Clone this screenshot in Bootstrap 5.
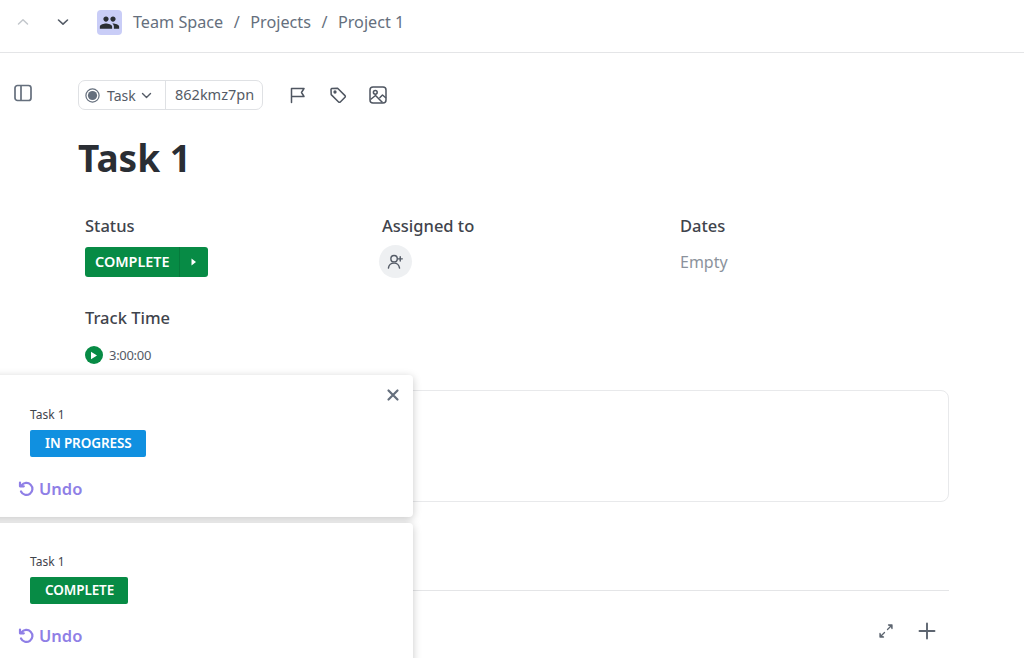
<!DOCTYPE html>
<html lang="en">
<head>
<meta charset="utf-8">
<title>Task 1</title>
<link href="https://cdn.jsdelivr.net/npm/bootstrap@5.3.0/dist/css/bootstrap.min.css" rel="stylesheet">
<style>
html,body{height:658px;overflow:hidden;background:#fff}
body{font-family:"Noto Sans","Open Sans",sans-serif;color:#2a2e34;position:relative}
svg{display:block}
.topstrip{height:53px;border-bottom:1px solid #e4e5e7;padding:0 0 8px 16px;color:#656f7d}
.chev-gap{margin:0 27px 0 26px}
.crumb-ico{width:25px;height:25px;background:#c9cdf7;border-radius:4px;color:#2a2e34}
.crumb{font-size:16.2px;line-height:22px;margin-left:11px}
.sep{margin:0 10.500px 0 10.500px}
.stage{display:flex;padding:27px 75px 0 14px}
.sidebtn{width:18px;margin-top:4px;color:#656f7d;flex:none}
.mainarea{margin-left:46px;flex:1;min-width:0}
.idgroup{height:30px;border:1px solid #dfe1e4;border-radius:7px;font-size:14.5px;color:#545b66}
.idleft{padding:0 8px 0 6px;border-right:1px solid #dfe1e4;height:100%;gap:5px;width:87px;font-size:14px}
.idkind{margin-left:2px}
.idright{padding:0 8px 0 9px}
.tools{margin-left:26px;gap:22px;color:#4f5661}
.title{font-size:37px;font-weight:700;line-height:50px;margin:23px 0 0;color:#2a2e34}
.fields{display:grid;grid-template-columns:297px 298px 1fr;padding-left:7px;margin-top:32px}
.flabel{font-size:16.500px;font-weight:500;line-height:22px;color:#3f444c}
.statuspill{margin-top:10px;height:30px;width:123px;background:#078b45;color:#fff;border-radius:3px;font-size:14.400px;font-weight:600}
.statustext{flex:1;padding-left:10px;line-height:30px}
.statusarrow{width:29px;height:100%;border-left:1px solid #067a3c}
.adduser{width:33px;height:33px;border-radius:50%;background:#eef0f2;margin:8px 0 0 -3px;color:#545b66}
.emptytxt{font-size:16px;color:#8b929c;line-height:30px;margin-top:10px}
.tracklabel{margin:29px 0 0 7px}
.timer{margin:17px 0 0 7px;gap:6px;font-size:13px;color:#545b66;line-height:18px;letter-spacing:-.3px}
.playdot{width:18px;height:18px;background:#078b45;border-radius:50%}
.descbox{height:112px;border:1px solid #e8e9eb;border-radius:8px;margin-top:26px}
.rule{border-top:1px solid #e4e5e7;margin-top:88px}
.bottomtools{gap:24px;margin-top:31px;padding-right:13px;color:#656f7d}
.toasts{position:absolute;left:-12px;top:375px;width:425px;display:flex;flex-direction:column;gap:6px}
.notice{background:#fff;border-radius:4px;box-shadow:0 2px 9px rgba(0,0,0,.22);padding:30px 0 0 42px;position:relative}
.notice-a{height:142px}
.notice-b{height:150px;padding-top:29px}
.ntitle{font-size:12px;line-height:20px;color:#3f444c}
.nbadge{display:inline-block;height:27px;line-height:27px;padding:0 14px 0 15px;border-radius:2px;color:#fff;font-size:13.500px;font-weight:600;letter-spacing:-.1px;margin-top:5px}
.bg-prog{background:#1090e0}
.bg-comp{background:#078b45}
.undo{position:absolute;left:30px;font-size:16.500px;font-weight:600;color:#8f7fe6;gap:4px;line-height:22px;top:103px}
.notice-b .undo{top:102px}
.closex{position:absolute;right:13px;top:13px;color:#656f7d}
</style>
</head>
<body>
<div class="topstrip d-flex align-items-center">
  <svg width="14" height="14" viewBox="0 0 14 14" fill="none" stroke="#c3c7cc" stroke-width="1.500" stroke-linecap="round" stroke-linejoin="round"><path d="M2.500 9 7 4.800 11.500 9"/></svg>
  <svg class="chev-gap" width="14" height="14" viewBox="0 0 14 14" fill="none" stroke="#545b66" stroke-width="1.600" stroke-linecap="round" stroke-linejoin="round"><path d="M2.500 5 7 9.200 11.500 5"/></svg>
  <div class="crumb-ico d-flex align-items-center justify-content-center">
    <svg width="21" height="21" viewBox="0 0 24 24" fill="currentColor"><path d="M16 11c1.660 0 2.990-1.340 2.990-3S17.660 5 16 5s-3 1.340-3 3 1.340 3 3 3zm-8 0c1.660 0 2.990-1.340 2.990-3S9.660 5 8 5 5 6.340 5 8s1.340 3 3 3zm0 2c-2.330 0-7 1.170-7 3.500V19h14v-2.500C15 14.170 10.330 13 8 13zm8 0c-.290 0-.620.020-.970.050 1.160.840 1.970 1.970 1.970 3.450V19h6v-2.500c0-2.330-4.670-3.500-7-3.500z"/></svg>
  </div>
  <div class="crumb d-flex"><span>Team Space</span><span class="sep">/</span><span>Projects</span><span class="sep">/</span><span>Project 1</span></div>
</div>

<div class="stage">
  <div class="sidebtn">
    <svg width="18" height="18" viewBox="0 0 18 18" fill="none" stroke="currentColor" stroke-width="1.700"><rect x="1" y="1.500" width="16" height="15" rx="2.500"/><path d="M7 1.500v15"/></svg>
  </div>
  <div class="mainarea">
    <div class="d-flex align-items-center">
      <div class="idgroup d-flex align-items-center">
        <div class="idleft d-flex align-items-center">
          <svg width="15" height="15" viewBox="0 0 15 15"><circle cx="7.500" cy="7.500" r="6.600" fill="none" stroke="#656f7d" stroke-width="1.200"/><circle cx="7.500" cy="7.500" r="4.600" fill="#656f7d"/></svg>
          <span class="idkind">Task</span>
          <svg width="11" height="11" viewBox="0 0 11 11" fill="none" stroke="#545b66" stroke-width="1.400" stroke-linecap="round" stroke-linejoin="round"><path d="M1.500 3.500 5.500 7.500 9.500 3.500"/></svg>
        </div>
        <div class="idright">862kmz7pn</div>
      </div>
      <div class="tools d-flex align-items-center">
        <svg width="18" height="18" viewBox="0 0 18 18" fill="none" stroke="currentColor" stroke-width="1.500" stroke-linejoin="round" stroke-linecap="round"><path d="M2.500 16.500V2.500h12.500l-2.500 4 2.500 4H2.500"/></svg>
        <svg width="18" height="18" viewBox="0 0 18 18" fill="none" stroke="currentColor" stroke-width="1.500" stroke-linejoin="round"><path d="M2 3.200 2.600 2.600 8.600 2.200 16 9.600a1.200 1.200 0 0 1 0 1.700l-4.700 4.700a1.200 1.200 0 0 1-1.700 0L2.200 8.600Z"/><circle cx="6" cy="6" r=".9"/></svg>
        <svg width="18" height="18" viewBox="0 0 18 18" fill="none" stroke="currentColor" stroke-width="1.500" stroke-linejoin="round"><rect x="1" y="1" width="16" height="16" rx="3"/><circle cx="6.300" cy="6.300" r="1.900"/><path d="M1.500 13.500 6.500 9.500l7 7M10.500 12l3-3 3.500 3"/></svg>
      </div>
    </div>
    <h1 class="title">Task 1</h1>
    <div class="fields">
      <div>
        <div class="flabel">Status</div>
        <div class="statuspill d-flex align-items-center">
          <span class="statustext">COMPLETE</span>
          <span class="statusarrow d-flex align-items-center justify-content-center"><svg width="8" height="10" viewBox="0 0 8 10" fill="#fff"><path d="M1.500 1.500 6 5 1.500 8.500Z"/></svg></span>
        </div>
      </div>
      <div>
        <div class="flabel">Assigned to</div>
        <div class="adduser d-flex align-items-center justify-content-center">
          <svg width="17" height="17" viewBox="0 0 18 18" fill="none" stroke="currentColor" stroke-width="1.500" stroke-linecap="round"><circle cx="7.500" cy="6" r="3.400"/><path d="M1.500 16c.4-3.400 2.800-5.300 6-5.300s5.200 1.600 5.800 5.300M14 4v4.500M11.800 6.200h4.400"/></svg>
        </div>
      </div>
      <div>
        <div class="flabel">Dates</div>
        <div class="emptytxt">Empty</div>
      </div>
    </div>
    <div class="flabel tracklabel">Track Time</div>
    <div class="timer d-flex align-items-center">
      <span class="playdot d-flex align-items-center justify-content-center"><svg width="8" height="9" viewBox="0 0 8 9" fill="#fff"><path d="M1 .8 7 4.500 1 8.200Z"/></svg></span>
      <span>3:00:00</span>
    </div>
    <div class="descbox"></div>
    <div class="rule"></div>
    <div class="bottomtools d-flex justify-content-end align-items-center">
      <svg width="16" height="16" viewBox="0 0 16 16" fill="#5d6570" stroke="#5d6570" stroke-width="1.300" stroke-linecap="round" stroke-linejoin="round"><path d="M9.500 6.500 14 2M10.500 2H14V5.500M6.500 9.500 2 14M2 10.500V14H5.500"/></svg>
      <svg width="18" height="18" viewBox="0 0 18 18" fill="none" stroke="#5d6570" stroke-width="1.900" stroke-linecap="round"><path d="M9 1.500v15M1.500 9h15"/></svg>
    </div>
  </div>
</div>

<div class="toasts">
  <div class="notice notice-a">
    <svg class="closex" width="14" height="14" viewBox="0 0 14 14" fill="none" stroke="currentColor" stroke-width="2.200" stroke-linecap="round"><path d="M2.500 2.500l9 9M11.500 2.500l-9 9"/></svg>
    <div class="ntitle">Task 1</div>
    <span class="nbadge bg-prog">IN PROGRESS</span>
    <div class="undo d-flex align-items-center">
      <svg width="17" height="17" viewBox="0 0 17 17" fill="none" stroke="currentColor" stroke-width="2.200" stroke-linecap="round" stroke-linejoin="round"><path d="M3.500 4.500A6 6 0 1 1 3 10.500"/><path d="M2 1.500v3.800h3.800"/></svg>
      <span>Undo</span>
    </div>
  </div>
  <div class="notice notice-b">
    <div class="ntitle">Task 1</div>
    <span class="nbadge bg-comp">COMPLETE</span>
    <div class="undo d-flex align-items-center">
      <svg width="17" height="17" viewBox="0 0 17 17" fill="none" stroke="currentColor" stroke-width="2.200" stroke-linecap="round" stroke-linejoin="round"><path d="M3.500 4.500A6 6 0 1 1 3 10.500"/><path d="M2 1.500v3.800h3.800"/></svg>
      <span>Undo</span>
    </div>
  </div>
</div>
<script src="https://cdn.jsdelivr.net/npm/bootstrap@5.3.0/dist/js/bootstrap.bundle.min.js"></script>
</body>
</html>
